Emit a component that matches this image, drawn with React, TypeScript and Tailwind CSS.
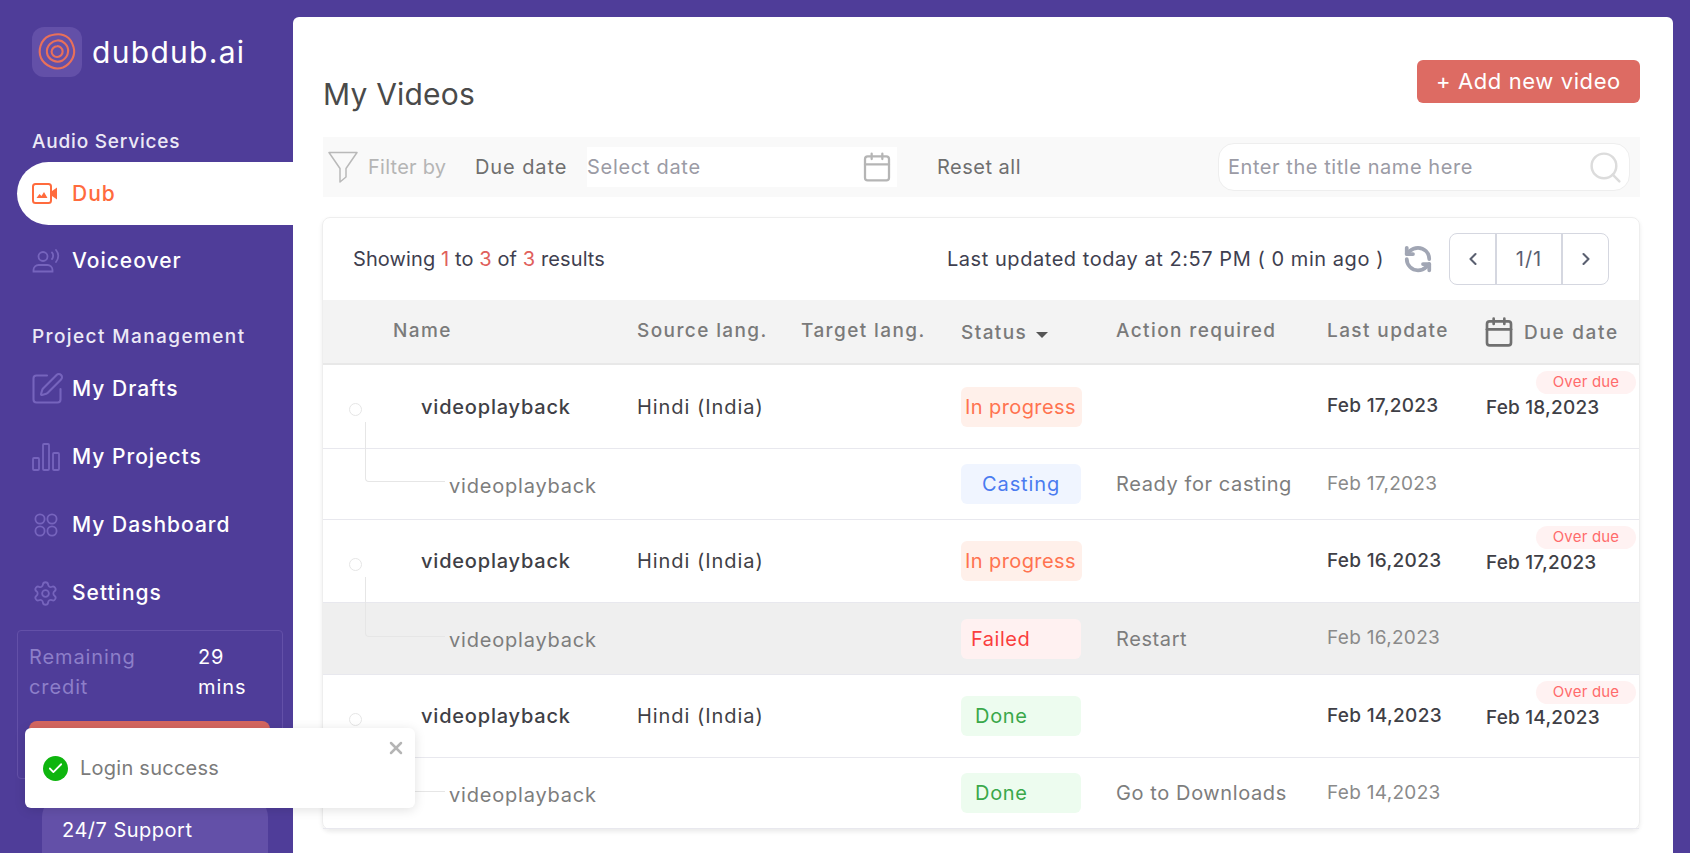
import { Calendar, ChevronLeft, ChevronRight, RefreshCcw, Search, Settings, SquarePen, X, Check } from "lucide-react";

const FONT = "font-['Inter','Liberation_Sans',sans-serif]";

function Logo() {
  return (
    <div className="flex h-[50px] w-[50px] items-center justify-center rounded-xl bg-[#6350a8]">
      <svg width="40" height="40" viewBox="0 0 40 40" fill="none" stroke="#e9705a" strokeWidth="2.100">
        <path d="M18 2.500c5-.8 10 .5 13.500 3.500 3 2.500 3.800 5.500 5 9 1.200 4 1 7.500-1 11.500-2 3.800-5 7-9.500 9-4 1.500-8 1.500-12-.5-4.500-2-8-4.500-10-9-1.700-4-1.700-8-.5-12C5 9 8.500 5.500 12.500 3.800c1.800-.7 3.600-1 5.500-1.300z" />
        <path d="M20 8.500c3-.5 6 1 8 3 2.500 2.500 3.500 5.500 3 8.500-.3 3.500-2.500 6.500-5.500 8.500-3 1.500-6.500 1.500-9.500 0-3-1.500-5.500-4-6-7.500-.5-3.500.5-6.500 3-9 2-2 4.300-3.200 7-3.500z" />
        <path d="M20 14.200c2.800-.3 5.500 2 5.600 5 .2 3-2.300 5.800-5.400 5.800-3 .1-5.500-2.300-5.600-5.200-.1-2.900 2.500-5.400 5.400-5.600z" />
      </svg>
    </div>
  );
}

function DubIcon() {
  return (
    <svg width="26" height="21" viewBox="0 0 26 21" fill="none">
      <rect x="1" y="1" width="18" height="19" rx="2.500" stroke="#ff6b3d" strokeWidth="2" />
      <path d="M4.500 15l3-4 2 2 2.500-4 3.500 6z" fill="#ff6b3d" />
      <path d="M20 8l5-3.500v12L20 13z" fill="#ff6b3d" />
    </svg>
  );
}

function VoiceIcon() {
  return (
    <svg width="28" height="24" viewBox="0 0 28 24" fill="none" stroke="#7664bd" strokeWidth="1.800" strokeLinecap="round">
      <circle cx="11" cy="7.500" r="4.500" />
      <path d="M1.500 22.500v-1.500c0-3 2.500-5 5-5h9c2.500 0 5 2 5 5v1.500z" />
      <path d="M20 3.500c1.500 1.500 1.500 5 0 6.500" />
      <path d="M24 1c3 3.500 3 8.500 0 12" />
    </svg>
  );
}

function BarsIcon() {
  return (
    <svg width="28" height="28" viewBox="0 0 28 28" fill="none" stroke="#7664bd" strokeWidth="1.800">
      <rect x="1" y="15" width="6" height="12" rx="1" />
      <rect x="11" y="1" width="6" height="26" rx="1" />
      <rect x="21" y="10" width="6" height="17" rx="1" />
    </svg>
  );
}

function CirclesIcon() {
  return (
    <svg width="24" height="24" viewBox="0 0 24 24" fill="none" stroke="#7664bd" strokeWidth="1.800">
      <circle cx="6" cy="6" r="4.600" />
      <circle cx="18" cy="6" r="4.600" />
      <circle cx="6" cy="18" r="4.600" />
      <circle cx="18" cy="18" r="4.600" />
    </svg>
  );
}

function FunnelIcon() {
  return (
    <svg width="30" height="32" viewBox="0 0 30 32" fill="none" stroke="#b9b9b9" strokeWidth="1.500" strokeLinejoin="round">
      <path d="M1 1.500h28L18 17.500v8.500l-6 5V17.500z" />
    </svg>
  );
}

function SideItem({ icon, label }: { icon: React.ReactNode; label: string }) {
  return (
    <div className="flex h-[68px] items-center pl-[32px]">
      <div className="flex w-[40px] shrink-0 items-center">{icon}</div>
      <span className="text-[21px] font-medium tracking-[1px] text-white">{label}</span>
    </div>
  );
}

function Sidebar() {
  return (
    <aside className="w-[293px] shrink-0 pt-[27px]">
      <div className="flex items-center gap-[10px] pl-[32px]">
        <Logo />
        <span className="text-[30px] leading-[50px] tracking-[1.300px] text-white">dubdub.ai</span>
      </div>
      <p className="mt-[53px] pl-[32px] text-[19px] leading-[24px] font-medium tracking-[0.8px] text-[#ece9f6]">Audio Services</p>
      <div className="mt-[8px] ml-[17px] flex h-[63px] items-center rounded-l-full bg-white pl-[15px]">
        <div className="flex w-[40px] shrink-0 items-center"><DubIcon /></div>
        <span className="text-[21px] font-medium tracking-[1px] text-[#ff6b3d]">Dub</span>
      </div>
      <div className="mt-[2px]"><SideItem icon={<VoiceIcon />} label="Voiceover" /></div>
      <p className="mt-[30px] pl-[32px] text-[19px] leading-[24px] font-medium tracking-[1.400px] text-[#ece9f6]">Project Management</p>
      <div className="mt-[6px]">
        <SideItem icon={<SquarePen size={36} strokeWidth={1.400} color="#7664bd" className="-ml-[3px]" />} label="My Drafts" />
        <SideItem icon={<BarsIcon />} label="My Projects" />
        <SideItem icon={<div className="pl-[2px]"><CirclesIcon /></div>} label="My Dashboard" />
        <SideItem icon={<Settings size={27} strokeWidth={1.600} color="#7664bd" />} label="Settings" />
      </div>
      <div className="mt-[3px] ml-[17px] h-[149px] w-[266px] rounded border border-[#6350a8] px-[11px] pt-[11px]">
        <div className="flex text-[20px] leading-[30px] tracking-[0.9px]">
          <span className="w-[169px] text-[#8d7fc9]">Remaining<br />credit</span>
          <span className="text-white">29<br />mins</span>
        </div>
        <div className="mt-[19px] h-[48px] w-[241px] rounded-lg bg-[#d4665f]" />
      </div>
      <div className="mt-[18px] ml-[42px] h-[80px] w-[226px] rounded-[20px] bg-[#6350a8] pt-[21px] pl-[20px] text-[20px] leading-[24px] tracking-[0.5px] text-white">24/7 Support</div>
    </aside>
  );
}

type Tone = "progress" | "casting" | "failed" | "done";

const TONES: Record<Tone, string> = {
  progress: "w-[121px] pl-[4px] tracking-[0.4px] bg-[#fff0ea] text-[#ff7350]",
  casting: "w-[120px] pl-[21px] tracking-[0.9px] bg-[#f0f5ff] text-[#4a7bf0]",
  failed: "w-[120px] pl-[10px] tracking-[0.5px] bg-[#fff1f1] text-[#fa3e3e]",
  done: "w-[120px] pl-[14px] tracking-[0.7px] bg-[#edfcef] text-[#3aa84a]",
};

function Badge({ tone, label }: { tone: Tone; label: string }) {
  return <span className={`flex h-[40px] items-center rounded-md text-[20px] ${TONES[tone]}`}>{label}</span>;
}

type Parent = { status: [Tone, string]; updated: string; due: string; height: string };
type Child = { status: [Tone, string]; action: string; updated: string; height: string; grey?: boolean };

const GRID = "grid grid-cols-[314px_164px_160px_155px_211px_159px_1fr]";

function ParentRow({ row }: { row: Parent }) {
  return (
    <div className={`${GRID} ${row.height} relative items-center border-b border-[#e8e8ee]`}>
      <span className="absolute top-[38px] left-[26px] h-[13px] w-[13px] rounded-full border border-[#e6e6e6]" />
      <span className="absolute top-[57px] left-[42px] z-10 h-[60px] w-[80px] rounded-bl-sm border-b border-l border-[#e6e6e6]" />
      <span className="pl-[98px] text-[20px] font-medium tracking-[0.8px] text-[#3f3f46]">videoplayback</span>
      <span className="text-[20px] tracking-[0.95px] whitespace-nowrap text-[#3f3f46]">Hindi (India)</span>
      <span />
      <Badge tone={row.status[0]} label={row.status[1]} />
      <span />
      <span className="text-[19px] font-medium tracking-[0.3px] text-[#3f3f46]">{row.updated}</span>
      <span className="pt-[4px] text-[19px] font-medium tracking-[0.2px] whitespace-nowrap text-[#3f3f46]">{row.due}</span>
      <span className="absolute top-[6px] right-[3px] flex h-[23px] w-[100px] items-center justify-center rounded-full bg-[#fff2f2] text-[15px] tracking-[0.2px] text-[#ff6b6b]">Over due</span>
    </div>
  );
}

function ChildRow({ row }: { row: Child }) {
  return (
    <div className={`${GRID} ${row.height} items-center border-b border-[#e8e8ee] ${row.grey ? "bg-[#efefef]" : ""}`}>
      <span className="pt-[3px] pl-[126px] text-[20px] tracking-[0.8px] whitespace-nowrap text-[#7d7d7d]">videoplayback</span>
      <span />
      <span />
      <Badge tone={row.status[0]} label={row.status[1]} />
      <span className="text-[20px] tracking-[0.6px] whitespace-nowrap text-[#7d7d7d]">{row.action}</span>
      <span className="text-[19px] tracking-[0.3px] text-[#8a8a8a]">{row.updated}</span>
      <span />
    </div>
  );
}

const ROWS: { parent: Parent; child: Child }[] = [
  {
    parent: { status: ["progress", "In progress"], updated: "Feb 17,2023", due: "Feb 18,2023", height: "h-[84px]" },
    child: { status: ["casting", "Casting"], action: "Ready for casting", updated: "Feb 17,2023", height: "h-[71px]" },
  },
  {
    parent: { status: ["progress", "In progress"], updated: "Feb 16,2023", due: "Feb 17,2023", height: "h-[83px]" },
    child: { status: ["failed", "Failed"], action: "Restart", updated: "Feb 16,2023", height: "h-[72px]", grey: true },
  },
  {
    parent: { status: ["done", "Done"], updated: "Feb 14,2023", due: "Feb 14,2023", height: "h-[83px]" },
    child: { status: ["done", "Done"], action: "Go to Downloads", updated: "Feb 14,2023", height: "h-[71px]" },
  },
];

function Toast() {
  return (
    <div className="absolute top-[728px] left-[25px] z-20 flex h-[80px] w-[390px] items-center rounded-md bg-white pl-[18px] shadow-[0_2px_12px_rgba(0,0,0,0.12)]">
      <span className="flex h-[25px] w-[25px] items-center justify-center rounded-full bg-[#0eb50e]">
        <Check size={17} strokeWidth={2.500} color="white" />
      </span>
      <span className="ml-[12px] text-[20px] tracking-[0.25px] text-[#7b7b7b]">Login success</span>
      <X size={20} strokeWidth={3} color="#b5b5b5" className="absolute top-[10px] right-[9px]" />
    </div>
  );
}

export default function App() {
  return (
    <div className={`${FONT} relative flex h-[853px] w-[1690px] overflow-hidden bg-[#4f3d99]`}>
      <Sidebar />
      <main className="mt-[17px] w-[1380px] rounded-t-md bg-white pr-[33px] pl-[30px]">
        <div className="flex h-[120px] justify-between">
          <h1 className="pt-[56px] text-[30px] leading-[42px] tracking-[0.2px] text-[#4a4a4a]">My Videos</h1>
          <button className="mt-[43px] h-[43px] w-[223px] rounded-md bg-[#dd6b63] text-[22px] tracking-[0.6px] text-white">+ Add new video</button>
        </div>
        <div className="flex h-[60px] items-center bg-[#f9f9f9]">
          <div className="ml-[5px]"><FunnelIcon /></div>
          <span className="ml-[10px] w-[107px] text-[20px] tracking-[0.25px] text-[#b5b5b5]">Filter by</span>
          <span className="w-[112px] text-[20px] tracking-[0.9px] text-[#6f6f6f]">Due date</span>
          <div className="flex h-[40px] w-[310px] items-center justify-between bg-white pr-[4px]">
            <span className="text-[20px] tracking-[0.7px] text-[#9b9ba5]">Select date</span>
            <Calendar size={32} strokeWidth={1.700} color="#b5b5b5" />
          </div>
          <span className="ml-[40px] w-[281px] text-[20px] tracking-[0.5px] text-[#6f6f6f]">Reset all</span>
          <div className="flex h-[48px] w-[412px] items-center justify-between rounded-2xl border border-[#eeeeee] bg-white pr-[5px] pl-[9px]">
            <span className="text-[20px] tracking-[0.56px] text-[#9b9ba5]">Enter the title name here</span>
            <Search size={37} strokeWidth={1.600} color="#dcdcdc" />
          </div>
        </div>
        <section className="mt-[20px] -ml-[1px] rounded-lg border border-[#eeeeee] shadow-[0_2px_4px_rgba(0,0,0,0.08)]">
          <div className="flex h-[82px] items-center pr-[30px] pl-[30px]">
            <p className="text-[20px] tracking-[0.1px] text-[#3f3f50]">
              Showing <span className="text-[#e0605b]">1</span> to <span className="text-[#e0605b]">3</span> of{" "}
              <span className="text-[#e0605b]">3</span> results
            </p>
            <p className="ml-auto text-[20px] tracking-[0.55px] text-[#3f3f50]">Last updated today at 2:57 PM ( 0 min ago )</p>
            <RefreshCcw size={30} strokeWidth={3} color="#a1a6b4" className="mr-[16px] ml-[19px]" />
            <div className="flex h-[52px] w-[160px] rounded-lg border border-[#d5d7e0] text-[#5a6070]">
              <span className="flex w-[47px] items-center justify-center border-r-2 border-[#d5d7e0]"><ChevronLeft size={20} strokeWidth={2.500} /></span>
              <span className="flex flex-1 items-center justify-center border-r-2 border-[#d5d7e0] text-[20px] tracking-[1px]">1/1</span>
              <span className="flex w-[45px] items-center justify-center"><ChevronRight size={20} strokeWidth={2.500} /></span>
            </div>
          </div>
          <div className={`${GRID} h-[65px] items-center border-b-2 border-[#e8e8e8] bg-[#f3f3f3] text-[19px] font-medium tracking-[1.400px] text-[#7a7a7a]`}>
            <span className="pl-[70px]">Name</span>
            <span>Source lang.</span>
            <span>Target lang.</span>
            <span className="flex items-center gap-[9px] pt-[3px]">Status <span className="mt-[3px] h-0 w-0 border-x-[6px] border-t-[6px] border-x-transparent border-t-[#555555]" /></span>
            <span>Action required</span>
            <span>Last update</span>
            <span className="flex items-center gap-[9px] whitespace-nowrap">
              <Calendar size={32} strokeWidth={2} color="#707070" className="-ml-[3px]" />
              <span className="pt-[3px] tracking-[1.700px]">Due date</span>
            </span>
          </div>
          {ROWS.map((r, i) => (
            <div key={i}>
              <ParentRow row={r.parent} />
              <ChildRow row={r.child} />
            </div>
          ))}
        </section>
      </main>
      <Toast />
    </div>
  );
}
